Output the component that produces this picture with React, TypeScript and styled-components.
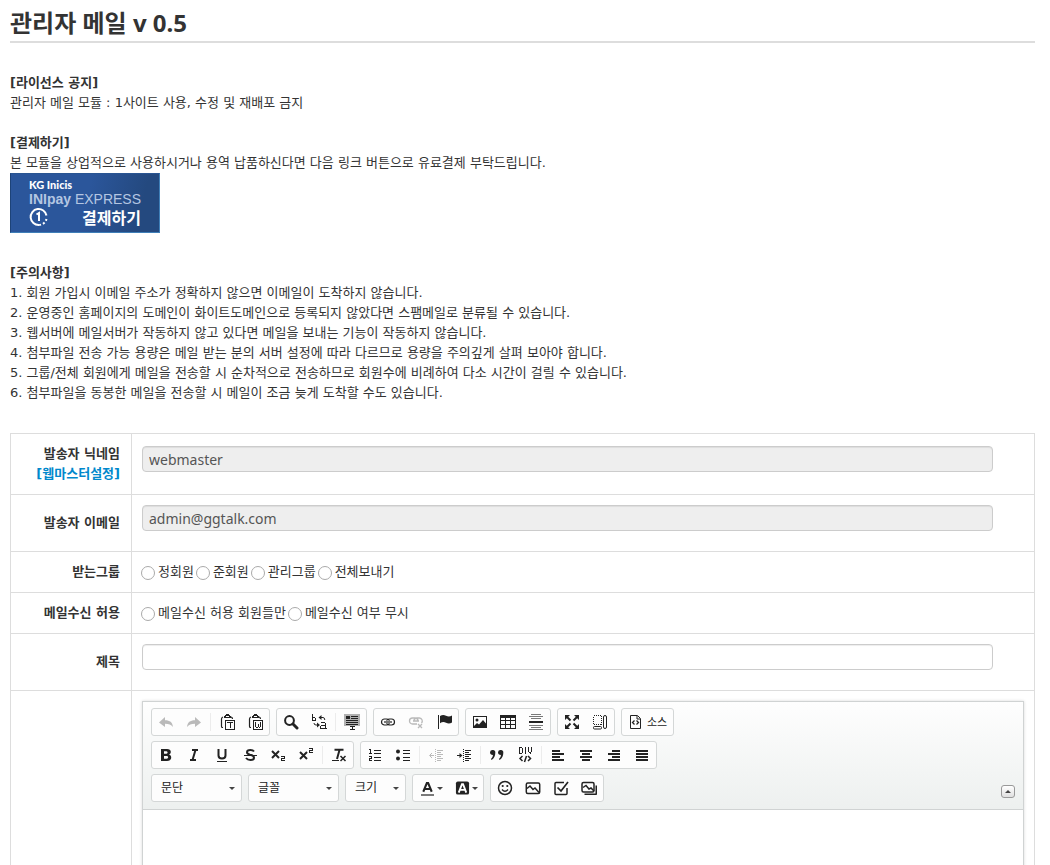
import React from 'react';
import styled, { createGlobalStyle, css } from 'styled-components';

const Global = createGlobalStyle`
  * { box-sizing: border-box; }
  body {
    margin: 0;
    background: #fff;
    color: #333;
    font: 13px/20px "DejaVu Sans", "Noto Sans CJK KR", sans-serif;
  }
`;

const Page = styled.main`
  padding: 8px 15px 0 10px;
`;

const Title = styled.h1`
  margin: 0 0 30px;
  padding-bottom: 3px;
  border-bottom: 2px solid #ddd;
  font: 700 24px/30px "Noto Sans", "Noto Sans CJK KR", sans-serif;
`;

const Notice = styled.section<{ $gap?: number }>`
  margin-bottom: ${p => p.$gap ?? 20}px;
`;

const NoticeTitle = styled.h2`
  margin: 0;
  font-size: 13px;
  line-height: 20px;
`;

const Text = styled.p`
  margin: 0;
`;

const NoteList = styled.ol`
  margin: 0;
  padding: 0;
  list-style: decimal inside;
`;

const PayButton = styled.button`
  display: grid;
  grid-template-columns: 30px 1fr;
  align-content: start;
  width: 150px;
  height: 60px;
  padding: 4px 18px 0 18px;
  border: 1px solid;
  border-color: #2a5592 #3f7fb8 #3f7fb8 #1d4378;
  background: linear-gradient(105deg, #2b569b 50%, #24497f 85%);
  color: #fff;
  font-family: "Liberation Sans", "Noto Sans CJK KR", sans-serif;
  text-align: left;
  cursor: pointer;
`;

const PayBrand = styled.span`
  grid-column: 1 / 3;
  font: 900 11px/13px Lato, sans-serif;
`;

const PayName = styled.span`
  grid-column: 1 / 3;
  color: #b4c6e2;
  font-size: 14px;
  line-height: 16px;
  white-space: nowrap;
`;

const PayAction = styled.span`
  font: 700 16px/20px "Noto Sans CJK KR", sans-serif;
  text-align: right;
`;

const FormTable = styled.table`
  width: 100%;
  border-collapse: collapse;
  border: 1px solid #ddd;
`;

const Label = styled.th`
  width: 121px;
  padding: 10px 11px 10px 10px;
  border: 1px solid #ddd;
  text-align: right;
  font-weight: 700;
`;

const Cell = styled.td`
  padding: 10px;
  border: 1px solid #ddd;
`;

const WebmasterLink = styled.a`
  display: block;
  color: #08c;
  text-decoration: none;
`;

const TextField = styled.input`
  display: block;
  width: calc(95% + 13px);
  height: 26px;
  margin: 0 0 10px;
  padding: 0 6px;
  border: 1px solid #ccc;
  border-radius: 4px;
  background: #fff;
  box-shadow: inset 0 1px 1px rgba(0, 0, 0, 0.075);
  color: #555;
  font: 14px/20px "Noto Sans", "Noto Sans CJK KR", sans-serif;
  &:read-only { background: #eee; }
`;

const RadioRow = styled.div`
  display: flex;
  margin-left: -1px;
`;

const RadioLabel = styled.label`
  display: flex;
  align-items: center;
  gap: 3px;
  margin-right: 2px;
`;

const Radio = styled.input`
  appearance: none;
  width: 14px;
  height: 14px;
  margin: 2px 0 0;
  border: 1px solid #aaa;
  border-radius: 50%;
  background: #fff;
  &:checked { background: radial-gradient(#444 35%, #fff 40%); }
`;

const Editor = styled.div`
  border: 1px solid #d0d3d3;
  box-shadow: 0 0 3px rgba(0, 0, 0, 0.15);
`;

const Toolbar = styled.div`
  display: flex;
  justify-content: space-between;
  align-items: flex-end;
  padding: 6px 8px 2px;
  border-bottom: 1px solid #d0d3d3;
  background: linear-gradient(#fefefe, #edf0ef);
`;

const ToolRows = styled.div`
  display: flex;
  flex-direction: column;
  gap: 5px;
  padding-bottom: 5px;
`;

const ToolRow = styled.div`
  display: flex;
  flex-wrap: wrap;
  gap: 6px;
`;

const Group = styled.div`
  display: flex;
  height: 28px;
  border: 1px solid #d4d7d7;
  border-radius: 3px;
  background: #fdfdfd;
`;

const toolStyle = css`
  display: flex;
  align-items: center;
  height: 26px;
  margin: 0;
  border: 0;
  background: transparent;
  color: #222;
  font: 12px/18px "Noto Sans", "Noto Sans CJK KR", sans-serif;
  cursor: pointer;
`;

const Tool = styled.button`
  ${toolStyle}
  padding: 0 6px;
  gap: 3px;
  &:disabled { opacity: 0.3; cursor: default; }
`;

const SourceTool = styled(Tool)`
  font-size: 11px;
`;

const ColorTool = styled.button`
  ${toolStyle}
  width: 35px;
  padding: 0 5px 0 7px;
  gap: 2px;
`;

const Combo = styled.button<{ $width: number }>`
  ${toolStyle}
  justify-content: space-between;
  width: ${p => p.$width}px;
  padding: 0 6px 0 9px;
`;

const Separator = styled.span`
  width: 1px;
  height: 18px;
  margin: 4px 2px;
  background: #ececec;
`;

const Arrow = styled.span`
  border: 3px solid transparent;
  border-top-color: #444;
  border-bottom-width: 0;
`;

const Collapse = styled.button`
  display: flex;
  align-items: center;
  justify-content: center;
  width: 14px;
  height: 13px;
  margin-bottom: 9px;
  padding: 0;
  border: 1px solid #999;
  border-radius: 3px;
  background: linear-gradient(#fff, #e0e0e0);
`;

const ArrowUp = styled.span`
  border: 3px solid transparent;
  border-bottom-color: #444;
  border-top-width: 0;
`;

const Content = styled.div`
  min-height: 200px;
  padding: 20px;
  outline: 0;
`;

const Svg = ({ children }: { children: React.ReactNode }) => (
  <svg width="16" height="16" viewBox="0 0 16 16" fill="none" stroke="currentColor" aria-hidden="true">
    {children}
  </svg>
);

const fill = { fill: 'currentColor', stroke: 'none' };
const crisp = { shapeRendering: 'crispEdges' as const };

const clipboard = (
  <>
    <path d="M4 13.500H3.500q-1 0-1-1.500V5q0-1.500 1.500-2M12 3q1.500.3 1.500 2" strokeWidth="1.200" />
    <path {...fill} {...crisp} d="M6 1h1V0h3v1h1v1h1v2H5V2h1z" />
    <path {...crisp} stroke="#fdfdfd" d="M7 2.500h3" />
    <path {...crisp} d="M6.500 6.500h9v9h-9z" />
  </>
);

const icons: Record<string, React.ReactNode> = {
  undo: <path {...fill} d="M1 8.500 7 3v3.200c5 0 7.500 2 8 6.800-2-2.500-4-3.200-8-3.200V13Z" />,
  redo: <path {...fill} d="M15 8.500 9 3v3.200c-5 0-7.500 2-8 6.800 2-2.500 4-3.200 8-3.200V13Z" />,
  pasteText: (
    <>
      {clipboard}
      <path {...crisp} d="M8 8.500h6M11.500 9v5" />
    </>
  ),
  pasteWord: (
    <>
      {clipboard}
      <path {...crisp} d="M8.500 8v5M13.500 8v5M11.500 10v3M9 13.500h2M12 13.500h1" />
    </>
  ),
  find: (
    <>
      <circle cx="6.500" cy="6.500" r="4.400" strokeWidth="2" />
      <path d="m10 10 4 4" strokeWidth="3" strokeLinecap="round" />
    </>
  ),
  replace: (
    <>
      <path {...crisp} d="M1.500 0v7M2 3.500h2M4.500 4v3M2 6.500h3" />
      <path {...crisp} d="M10 8.500h4M14.500 9v6M10 11.500h4M9.500 12v3M10 14.500h6" strokeWidth="1.500" />
      <path d="M9.500 3.500H12q1.800 0 1.800 2.500M3 9q0 2 2 2h1.500" />
      <path {...fill} d="M7.500 3.500 10.500 1v5ZM9 11 6 8.500v5Z" />
    </>
  ),
  selectAll: (
    <>
      <path {...fill} opacity=".35" d="M0 0h16v12H0z" />
      <path {...crisp} d="M7 2.500h7M7 4.500h7M2 6.500h12M2 8.500h12M2 10.500h12" />
      <path {...fill} {...crisp} d="M2 2h4v3H2z" />
      <path {...crisp} d="M6 12.500h5M8.500 13v2M6 15.500h5" />
    </>
  ),
  link: (
    <>
      <rect x="1.500" y="5" width="8" height="6" rx="3" strokeWidth="1.200" />
      <rect x="6.500" y="5" width="8" height="6" rx="3" strokeWidth="1.200" />
      <path d="M4 8h8" stroke="#fdfdfd" strokeWidth="2.500" />
      <path d="M4 8h8" strokeWidth="1.200" />
    </>
  ),
  unlink: (
    <>
      <path d="M9 10H4.500a3 3 0 0 1 0-6h2.500a3 3 0 0 1 3 3M6 7a3 3 0 0 1 3-3h2.500a3 3 0 0 1 2 5M5 7h6" strokeWidth="1.300" />
      <path d="m10 10 4 4m0-4-4 4" strokeWidth="1.300" />
    </>
  ),
  flag: (
    <>
      <path {...crisp} d="M2.500 1v14" />
      <path {...fill} d="M4 2q3-2 6-.3 3 1.500 6-.2v7q-3 1.700-6 .2Q7 7.200 4 9.200Z" />
    </>
  ),
  image: (
    <>
      <rect x="1.500" y="2.500" width="13" height="11" {...crisp} />
      <circle {...fill} cx="5" cy="6" r="1.500" />
      <path {...fill} d="m2 12 3-3 2 1.500L11 6l3 3.500V13H2Z" />
    </>
  ),
  table: (
    <>
      <path {...crisp} d="M.5 2.500h15v12H.5zM5.500 3v11M10.500 3v11M1 6.500h14M1 10.500h14" />
      <path {...fill} {...crisp} d="M0 1h16v3H0z" />
    </>
  ),
  rule: (
    <>
      <path {...crisp} opacity=".6" d="M3 .5h10M1 2.500h14M3 4.500h10M1 11.500h14M3 13.500h10M1 15.500h14" />
      <path {...fill} {...crisp} d="M1 7h14v2H1z" />
    </>
  ),
  maximize: (
    <>
      <path {...fill} d="M1 1h5L1 6zM15 1v5l-5-5zM1 15v-5l5 5zM15 15h-5l5-5z" />
      <path d="m3 3 3.500 3.500M13 3 9.500 6.500M3 13l3.500-3.500M13 13 9.500 9.500" strokeWidth="2" />
    </>
  ),
  blocks: (
    <>
      <rect x="1.500" y="1.500" width="8" height="9" strokeDasharray="1 1" {...crisp} />
      <rect x="1.500" y="12.500" width="8" height="2.500" rx="1" />
      <rect x="11.500" y="1.500" width="3" height="13" rx="1.500" />
    </>
  ),
  source: (
    <>
      <path d="M2.500 1.500h7l3 3v10h-10zM9 2v3h3" />
      <path d="M6.500 6.500 4.500 8.500l2 2M8.500 6.500l2 2-2 2" strokeWidth="1.300" />
    </>
  ),
  bold: <path {...fill} fillRule="evenodd" d="M3 2h6c5 0 4.500 5 2 5.500C14.500 8.500 14 14 9 14H3ZM6 4.300v2.400h2.500c1.500 0 1.500-2.400 0-2.400ZM6 9v2.700h2.700c1.900 0 1.900-2.700 0-2.700Z" />,
  italic: <path d="M6 3h6M4 13h6M9.500 3 6.500 13" strokeWidth="2" />,
  underline: (
    <>
      <path d="M4.500 2v6.500q0 3 3.500 3t3.500-3V2" strokeWidth="2" />
      <path {...crisp} d="M3 14.500h10" />
    </>
  ),
  strike: (
    <>
      <path d="M12 4.500Q11 3 8.500 3 5 3 5 5.300 5 7 8 7.800q4 .8 4 3 0 2.200-3.500 2.200-3 0-4.500-2" strokeWidth="2" />
      <path {...crisp} d="M2 8.500h13" />
    </>
  ),
  subscript: (
    <>
      <path d="m2 4 7 7M9 4l-7 7" strokeWidth="2" />
      <path {...crisp} d="M11 9.500h3M14.500 9v2M12 11.500h3M11.500 11v3M11 13.500h4" />
    </>
  ),
  superscript: (
    <>
      <path d="m2 5 7 7M9 5l-7 7" strokeWidth="2" />
      <path {...crisp} d="M11 1.500h3M14.500 1v2M12 3.500h3M11.500 3v3M11 5.500h4" />
    </>
  ),
  removeFormat: (
    <>
      <path d="M3.500 2.800h9M8.500 3 6 12" strokeWidth="2" />
      <path {...crisp} d="M1 13.500h7" />
      <path d="m9.500 9 5 5m0-5-5 5" strokeWidth="1.500" />
    </>
  ),
  numbered: (
    <>
      <path {...crisp} d="M2 2.500h1.500V7M2 6.500h3M2 9.500h2.500v2h-2v2H5" />
      <path {...crisp} d="M7 3.500h7M7 6.500h7M7 10.500h7M7 13.500h7" />
    </>
  ),
  bulleted: (
    <>
      <circle {...fill} cx="3" cy="4.500" r="2" />
      <circle {...fill} cx="3" cy="11.500" r="2" />
      <path {...crisp} d="M8 3.500h7M8 6.500h7M8 10.500h7M8 13.500h7" />
    </>
  ),
  outdent: (
    <>
      <path {...crisp} strokeDasharray="1 1" d="M7.500 2v13" />
      <path {...crisp} d="M9 3.500h6M9 5.500h4M9 7.500h6M9 9.500h4M9 11.500h6M9 13.500h4M2 8.500h4" />
      <path d="M4 6 1.500 8.500 4 11" />
    </>
  ),
  indent: (
    <>
      <path {...crisp} strokeDasharray="1 1" d="M7.500 2v13" />
      <path {...crisp} d="M9 3.500h6M9 5.500h4M9 7.500h6M9 9.500h4M9 11.500h6M9 13.500h4M1 8.500h4" />
      <path {...fill} d="M3.500 6 6.500 8.500l-3 2.500Z" />
    </>
  ),
  quote: (
    <>
      <path {...fill} d="M1 5.300a2.600 2.600 0 1 1 5.300.7Q6.300 10.500 2.500 13L2 12q2-2 2-4-3 0-3-2.700Z" />
      <path {...fill} d="M9 5.300a2.600 2.600 0 1 1 5.300.7Q14.300 10.500 10.500 13L10 12q2-2 2-4-3 0-3-2.700Z" />
    </>
  ),
  div: (
    <>
      <path {...crisp} d="M2.500 0v7M3 .5h2M3 6.500h2M5.500 1v5M8.500 0v7M11.500 0v5M14.500 0v5M12.500 5v1M13.500 5v2" />
      <path d="M5.500 9 3 11.500 5.500 14M11 9l2.500 2.500L11 14M9.500 9l-2 6" strokeWidth="1.500" />
    </>
  ),
  left: <path {...crisp} d="M2 4h8M2 7h12M2 10h8M2 13h12" strokeWidth="2" />,
  center: <path {...crisp} d="M2 4h12M4 7h8M2 10h12M4 13h8" strokeWidth="2" />,
  right: <path {...crisp} d="M6 4h8M2 7h12M6 10h8M2 13h12" strokeWidth="2" />,
  justify: <path {...crisp} d="M2 4h12M2 7h12M2 10h12M2 13h12" strokeWidth="2" />,
  textColor: (
    <>
      <path d="M3.500 12 7.300 2.800h1.400L12.500 12M5 9h6" strokeWidth="2.200" />
      <path {...fill} {...crisp} opacity=".6" d="M1 14h14v2H1z" />
    </>
  ),
  bgColor: (
    <>
      <rect {...fill} x="1" y="1" width="14" height="14" rx="2" />
      <path d="M4 13 7.400 4h1.200L12 13M5.500 10h5" stroke="#fff" strokeWidth="2" />
    </>
  ),
  smiley: (
    <>
      <circle cx="8" cy="8" r="6.500" strokeWidth="1.500" />
      <path d="M5 9.500q3 3.500 6 0" strokeWidth="1.300" />
      <circle {...fill} cx="5.700" cy="6" r="1.100" />
      <circle {...fill} cx="10.300" cy="6" r="1.100" />
    </>
  ),
  picture: (
    <>
      <rect x="1.300" y="3" width="13.400" height="10.500" rx="1.500" strokeWidth="1.500" />
      <path d="m2 8.500 3-2.500 3 3.500 2-1.500 4 4.500" strokeWidth="1.500" />
    </>
  ),
  check: (
    <>
      <path d="M14 8v5.500q0 1-1 1H3q-1 0-1-1v-10q0-1 1-1h8" strokeWidth="1.500" />
      <path d="m4.500 7.500 3.500 3.500L15 2" strokeWidth="1.700" />
    </>
  ),
  gallery: (
    <>
      <path d="M3.500 14.300h11q.8 0 .8-.8V5.500" strokeWidth="1.600" />
      <rect x="1" y="2.500" width="12" height="9.500" rx="1.500" strokeWidth="1.500" />
      <path d="m2 7.500 3-2 3 3.500 2-1 3 3" strokeWidth="1.500" />
    </>
  ),
};

type ToolSpec = [icon: string, title: string, disabled?: boolean] | null;

const ToolGroup = ({ tools }: { tools: ToolSpec[] }) => (
  <Group>
    {tools.map((tool, i) =>
      tool ? (
        <Tool key={tool[0]} type="button" aria-label={tool[1]} disabled={tool[2]}>
          <Svg>{icons[tool[0]]}</Svg>
        </Tool>
      ) : (
        <Separator key={i} />
      ),
    )}
  </Group>
);

const topGroups: ToolSpec[][] = [
  [['undo', '실행 취소', true], ['redo', '다시 실행', true], null, ['pasteText', '텍스트로 붙여넣기'], ['pasteWord', 'MS Word에서 붙여넣기']],
  [['find', '찾기'], ['replace', '바꾸기'], null, ['selectAll', '모두 선택']],
  [['link', '링크'], ['unlink', '링크 지우기', true], ['flag', '책갈피']],
  [['image', '이미지'], ['table', '표'], ['rule', '가로 줄']],
  [['maximize', '최대화'], ['blocks', '블록 보기']],
];

const formatGroups: ToolSpec[][] = [
  [['bold', '굵게'], ['italic', '기울임꼴'], ['underline', '밑줄'], ['strike', '취소선'], ['subscript', '아래 첨자'], ['superscript', '위 첨자'], null, ['removeFormat', '형식 지우기']],
  [
    ['numbered', '순번 목록'], ['bulleted', '비순번 목록'], null,
    ['outdent', '내어쓰기', true], ['indent', '들여쓰기'], null,
    ['quote', '인용 단락'], ['div', 'DIV 컨테이너'], null,
    ['left', '왼쪽 정렬'], ['center', '가운데 정렬'], ['right', '오른쪽 정렬'], ['justify', '양쪽 맞춤'],
  ],
];

const extraGroup: ToolSpec[] = [['smiley', '이모티콘'], ['picture', '그림 첨부'], ['check', '설문조사'], ['gallery', '이미지 갤러리']];

const combos: [string, number][] = [['문단', 89], ['글꼴', 89], ['크기', 59]];

const notes = [
  '회원 가입시 이메일 주소가 정확하지 않으면 이메일이 도착하지 않습니다.',
  '운영중인 홈페이지의 도메인이 화이트도메인으로 등록되지 않았다면 스팸메일로 분류될 수 있습니다.',
  '웹서버에 메일서버가 작동하지 않고 있다면 메일을 보내는 기능이 작동하지 않습니다.',
  '첨부파일 전송 가능 용량은 메일 받는 분의 서버 설정에 따라 다르므로 용량을 주의깊게 살펴 보아야 합니다.',
  '그룹/전체 회원에게 메일을 전송할 시 순차적으로 전송하므로 회원수에 비례하여 다소 시간이 걸릴 수 있습니다.',
  '첨부파일을 동봉한 메일을 전송할 시 메일이 조금 늦게 도착할 수도 있습니다.',
];

const RadioGroup = ({ name, options }: { name: string; options: string[] }) => (
  <RadioRow role="radiogroup">
    {options.map(option => (
      <RadioLabel key={option}>
        <Radio type="radio" name={name} value={option} />
        {option}
      </RadioLabel>
    ))}
  </RadioRow>
);

export default function App() {
  return (
    <Page>
      <Global />
      <Title>관리자 메일 v 0.5</Title>
      <Notice>
        <NoticeTitle>[라이선스 공지]</NoticeTitle>
        <Text>관리자 메일 모듈 : 1사이트 사용, 수정 및 재배포 금지</Text>
      </Notice>
      <Notice $gap={30}>
        <NoticeTitle>[결제하기]</NoticeTitle>
        <Text>본 모듈을 상업적으로 사용하시거나 용역 납품하신다면 다음 링크 버튼으로 유료결제 부탁드립니다.</Text>
        <PayButton type="button">
          <PayBrand>KG Inicis</PayBrand>
          <PayName><b>INIpay</b> EXPRESS</PayName>
          <svg width="20" height="20" viewBox="0 0 20 20" fill="none" stroke="#fff" strokeWidth="2" aria-hidden="true">
            <path d="M10 18a8 8 0 1 1 7.500-9.500" />
            <path d="M17.500 12A8 8 0 0 1 10 18" strokeDasharray="2 2" />
            <path d="M7.500 7.500 10 6v8" />
          </svg>
          <PayAction>결제하기</PayAction>
        </PayButton>
      </Notice>
      <Notice $gap={30}>
        <NoticeTitle>[주의사항]</NoticeTitle>
        <NoteList>
          {notes.map(note => <li key={note}>{note}</li>)}
        </NoteList>
      </Notice>
      <FormTable>
        <tbody>
          <tr>
            <Label scope="row">
              <label htmlFor="nick">발송자 닉네임</label>
              <WebmasterLink href="#webmaster">[웹마스터설정]</WebmasterLink>
            </Label>
            <Cell><TextField id="nick" readOnly defaultValue="webmaster" /></Cell>
          </tr>
          <tr>
            <Label scope="row"><label htmlFor="email">발송자 이메일</label></Label>
            <Cell><TextField id="email" readOnly defaultValue="admin@ggtalk.com" /></Cell>
          </tr>
          <tr>
            <Label scope="row">받는그룹</Label>
            <Cell><RadioGroup name="group" options={['정회원', '준회원', '관리그룹', '전체보내기']} /></Cell>
          </tr>
          <tr>
            <Label scope="row">메일수신 허용</Label>
            <Cell><RadioGroup name="allow" options={['메일수신 허용 회원들만', '메일수신 여부 무시']} /></Cell>
          </tr>
          <tr>
            <Label scope="row"><label htmlFor="subject">제목</label></Label>
            <Cell><TextField id="subject" /></Cell>
          </tr>
          <tr>
            <Label scope="row" />
            <Cell>
              <Editor>
                <Toolbar>
                  <ToolRows>
                    <ToolRow>
                      {topGroups.map((tools, i) => <ToolGroup key={i} tools={tools} />)}
                      <Group>
                        <SourceTool type="button"><Svg>{icons.source}</Svg>소스</SourceTool>
                      </Group>
                    </ToolRow>
                    <ToolRow>
                      {formatGroups.map((tools, i) => <ToolGroup key={i} tools={tools} />)}
                    </ToolRow>
                    <ToolRow>
                      {combos.map(([label, width]) => (
                        <Group key={label}>
                          <Combo type="button" aria-haspopup="listbox" $width={width}>{label}<Arrow /></Combo>
                        </Group>
                      ))}
                      <Group>
                        <ColorTool type="button" aria-label="글자 색상"><Svg>{icons.textColor}</Svg><Arrow /></ColorTool>
                        <ColorTool type="button" aria-label="배경 색상"><Svg>{icons.bgColor}</Svg><Arrow /></ColorTool>
                      </Group>
                      <ToolGroup tools={extraGroup} />
                    </ToolRow>
                  </ToolRows>
                  <Collapse type="button" aria-label="툴바 줄이기"><ArrowUp /></Collapse>
                </Toolbar>
                <Content contentEditable suppressContentEditableWarning role="textbox" aria-label="내용" />
              </Editor>
            </Cell>
          </tr>
        </tbody>
      </FormTable>
    </Page>
  );
}
